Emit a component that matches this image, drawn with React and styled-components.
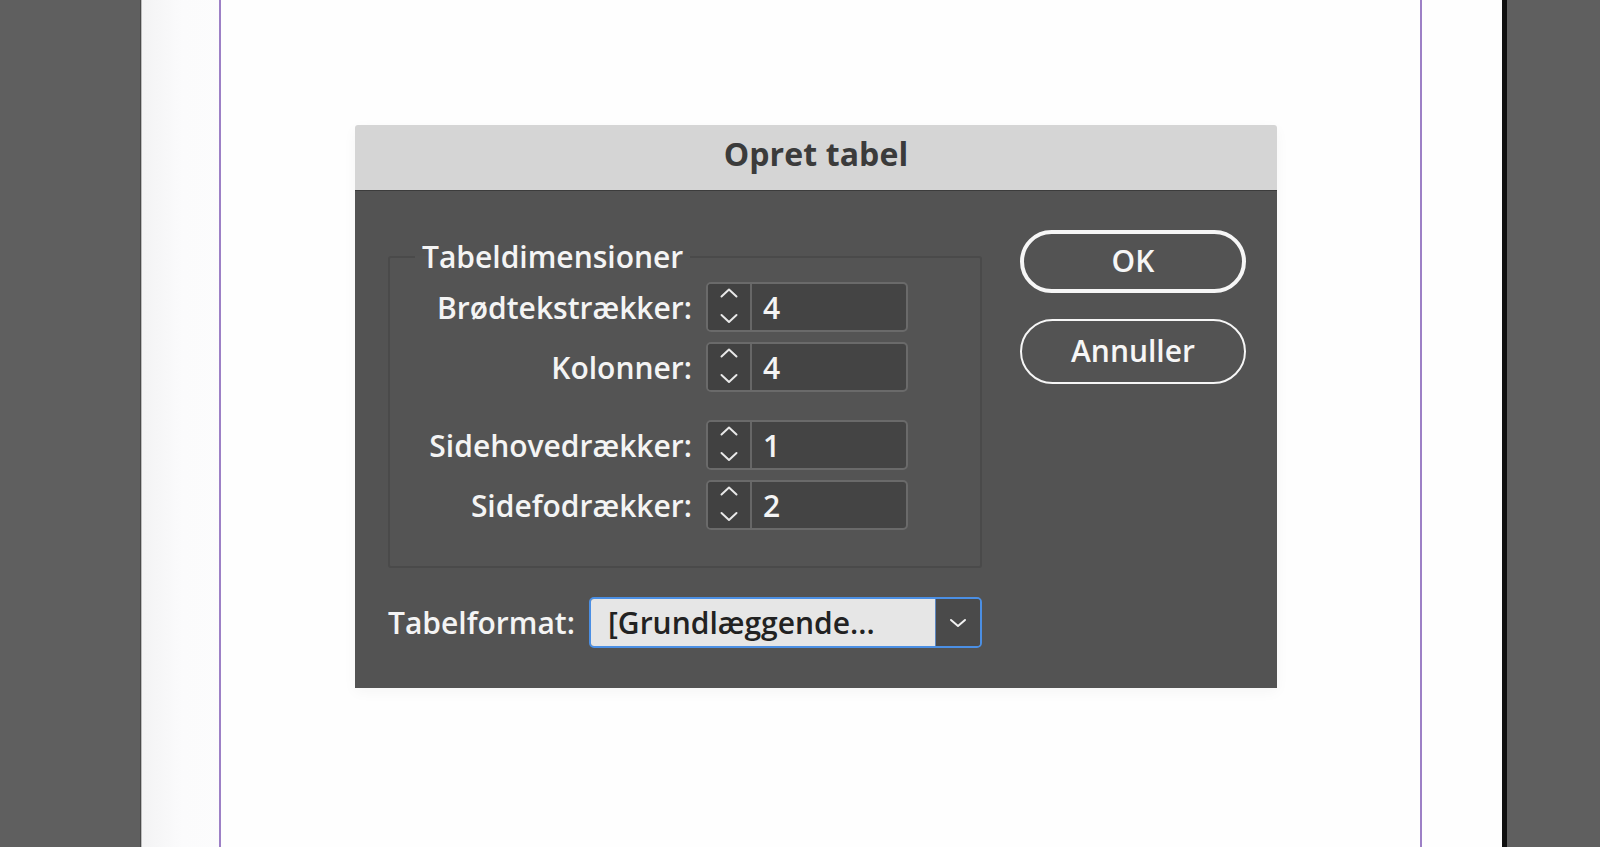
import React from 'react';
import styled, { createGlobalStyle } from 'styled-components';

const GlobalStyle = createGlobalStyle`
  html, body {
    margin: 0;
    padding: 0;
    width: 100%;
    height: 100%;
    overflow: hidden;
    background: #5e5e5e;
  }
  #root {
    height: 100%;
  }
`;

const Screen = styled.div`
  position: relative;
  display: flex;
  width: 1600px;
  height: 847px;
  font-family: 'Open Sans', 'Noto Sans', sans-serif;
`;

const Pasteboard = styled.div`
  flex: ${(p) => (p.$grow ? '1' : `0 0 ${p.$width}px`)};
  background: #5f5f5f;
  border-right: ${(p) => (p.$grow ? 'none' : '1px solid #4a4a4a')};
`;

const PageSheet = styled.div`
  flex: 0 0 1360px;
  background: linear-gradient(90deg, #f3f3f4 0px, #fbfbfc 40px, #fefefe 200px);
  border-left: 1px solid #bdbdbd;
`;

const MarginGuides = styled.div`
  margin-left: 77px;
  width: 1199px;
  height: 100%;
  border-left: 2px solid #9d80c6;
  border-right: 2px solid #9d80c6;
  background: #fefefe;
`;

const PageEdge = styled.div`
  flex: 0 0 5px;
  background: #101010;
`;

const Dialog = styled.div`
  position: absolute;
  left: 355px;
  top: 125px;
  width: 922px;
  height: 563px;
  display: flex;
  flex-direction: column;
  box-shadow: 0 4px 14px rgba(0, 0, 0, 0.04);
  border-top-left-radius: 3px;
  border-top-right-radius: 3px;
  overflow: hidden;
`;

const TitleBar = styled.div`
  height: 65px;
  flex: 0 0 65px;
  display: flex;
  align-items: center;
  justify-content: center;
  background: #d5d5d5;
  border-bottom: 1px solid #3c3c3c;
  box-sizing: content-box;
`;

const Title = styled.h1`
  margin: 0 0 8px;
  font-family: 'Open Sans', 'Liberation Sans', sans-serif;
  font-size: 32px;
  font-weight: 700;
  color: #3b3b3b;
  letter-spacing: 0.1px;
`;

const Body = styled.div`
  flex: 1;
  display: flex;
  gap: 38px;
  padding: 0 31px 0 33px;
  background: #535353;
`;

const FormColumn = styled.div`
  width: 594px;
  padding-top: 49px;
  display: flex;
  flex-direction: column;
`;

const Group = styled.fieldset`
  margin: 0;
  padding: 8px 0 36px;
  border: 2px solid #4a4a4a;
  border-radius: 3px;
  background: #545454;
`;

const textStyle = `
  font-size: 30px;
  font-weight: 600;
  letter-spacing: 0;
  color: #f4f4f4;
`;

const Legend = styled.legend`
  margin-left: 25px;
  padding: 0 7px;
  line-height: 34px;
  ${textStyle}
`;

const Grid = styled.div`
  display: grid;
  grid-template-columns: 302px 202px;
  column-gap: 14px;
  row-gap: 10px;
`;

const Label = styled.label`
  display: flex;
  align-items: center;
  justify-content: flex-end;
  height: 50px;
  white-space: nowrap;
  margin-top: ${(p) => (p.$spaced ? '18px' : '0')};
  ${textStyle}
`;

const Spinner = styled.div`
  display: flex;
  height: 50px;
  box-sizing: border-box;
  border: 2px solid #6a6a6a;
  border-radius: 5px;
  background: #444444;
  overflow: hidden;
  margin-top: ${(p) => (p.$spaced ? '18px' : '0')};
`;

const Steppers = styled.div`
  flex: 0 0 42px;
  border-right: 2px solid #676767;
  background: #414141;
  display: flex;
`;

const Value = styled.div`
  flex: 1;
  display: flex;
  align-items: center;
  padding-left: 11px;
  ${textStyle}
`;

const FormatRow = styled.div`
  display: flex;
  align-items: center;
  justify-content: space-between;
  margin-top: 29px;
`;

const FormatLabel = styled.label`
  white-space: nowrap;
  ${textStyle}
`;

const Select = styled.div`
  flex: 0 0 393px;
  display: flex;
  height: 51px;
  box-sizing: border-box;
  border: 2px solid #4b8fe4;
  border-radius: 5px;
  overflow: hidden;
`;

const SelectText = styled.div`
  flex: 1;
  display: flex;
  align-items: center;
  padding-left: 17px;
  background: #e6e6e6;
  white-space: nowrap;
  ${textStyle}
  color: #222222;
`;

const SelectArrow = styled.div`
  flex: 0 0 44px;
  display: flex;
  align-items: center;
  justify-content: center;
  background: #4a4a4a;
  border-left: 1px solid #5b86c0;
`;

const ButtonColumn = styled.div`
  width: 226px;
  padding-top: 39px;
  display: flex;
  flex-direction: column;
  gap: 26px;
`;

const Button = styled.button`
  height: ${(p) => (p.$primary ? '63px' : '65px')};
  box-sizing: border-box;
  border: ${(p) => (p.$primary ? '4px' : '2px')} solid #f6f6f6;
  border-radius: 34px;
  background: transparent;
  font-family: 'Open Sans', 'Noto Sans', sans-serif;
  padding: 0 0 2px;
  ${textStyle}
  color: #f6f6f6;
`;

const StepArrows = () => (
  <svg width="42" height="46" viewBox="0 0 42 46">
    <g fill="none" stroke="#e8e8e8" strokeWidth="2" strokeLinecap="round" strokeLinejoin="round">
      <path d="M13.5 12.5 L21 5.5 L28.5 12.5" />
      <path d="M13.5 31 L21 38 L28.5 31" />
    </g>
  </svg>
);

const Chevron = () => (
  <svg width="18" height="10" viewBox="0 0 18 10">
    <path
      d="M2 2 L9 8 L16 2"
      fill="none"
      stroke="#f2f2f2"
      strokeWidth="2"
      strokeLinecap="round"
      strokeLinejoin="round"
    />
  </svg>
);

const rows = [
  { label: 'Brødtekstrækker:', value: '4' },
  { label: 'Kolonner:', value: '4' },
  { label: 'Sidehovedrækker:', value: '1', spaced: true },
  { label: 'Sidefodrækker:', value: '2' },
];

const App = () => {
  return (
    <>
      <GlobalStyle />
      <Screen>
        <Pasteboard $width={140} />
        <PageSheet>
          <MarginGuides />
        </PageSheet>
        <PageEdge />
        <Pasteboard $grow />

        <Dialog>
          <TitleBar>
            <Title>Opret tabel</Title>
          </TitleBar>
          <Body>
            <FormColumn>
              <Group>
                <Legend>Tabeldimensioner</Legend>
                <Grid>
                  {rows.map((row) => (
                    <React.Fragment key={row.label}>
                      <Label $spaced={row.spaced}>{row.label}</Label>
                      <Spinner $spaced={row.spaced}>
                        <Steppers>
                          <StepArrows />
                        </Steppers>
                        <Value>{row.value}</Value>
                      </Spinner>
                    </React.Fragment>
                  ))}
                </Grid>
              </Group>
              <FormatRow>
                <FormatLabel>Tabelformat:</FormatLabel>
                <Select>
                  <SelectText>[Grundlæggende...</SelectText>
                  <SelectArrow>
                    <Chevron />
                  </SelectArrow>
                </Select>
              </FormatRow>
            </FormColumn>
            <ButtonColumn>
              <Button $primary>OK</Button>
              <Button>Annuller</Button>
            </ButtonColumn>
          </Body>
        </Dialog>
      </Screen>
    </>
  );
};

export default App;
